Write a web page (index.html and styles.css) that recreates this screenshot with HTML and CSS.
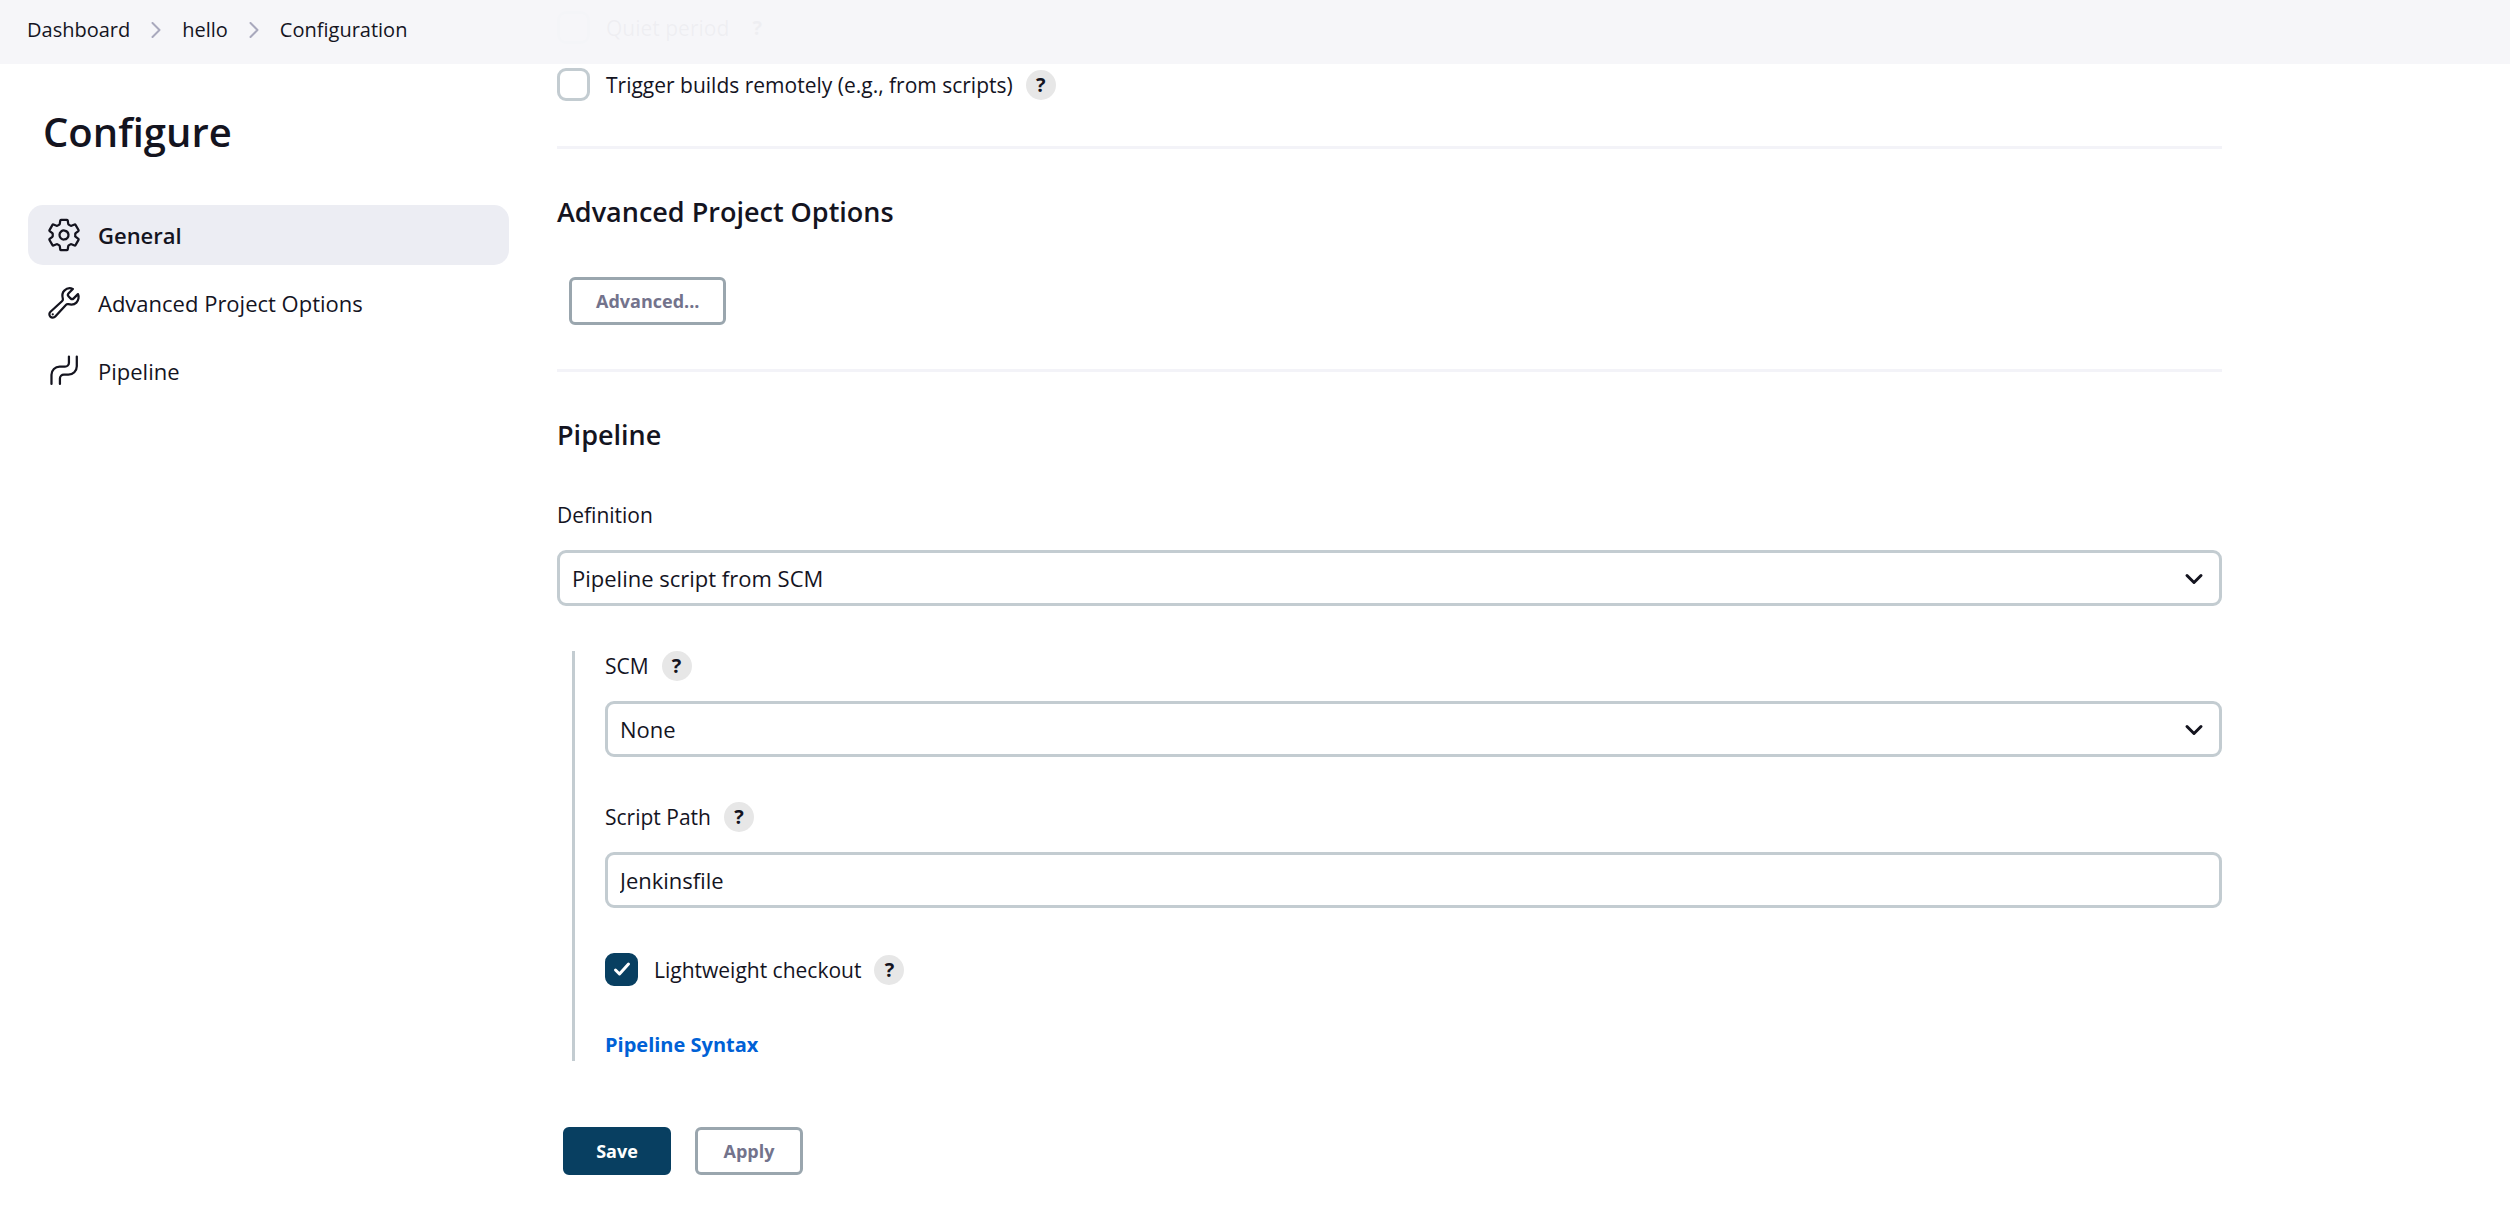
FILE: index.html
```html
<!DOCTYPE html>
<html lang="en">
<head>
<meta charset="utf-8">
<title>hello Config</title>
<link rel="stylesheet" href="styles.css">
</head>
<body>
<header class="breadcrumbs">
  <nav aria-label="Breadcrumb">
    <ol class="breadcrumbs-list">
      <li><a href="#dashboard">Dashboard</a></li>
      <li class="breadcrumbs-separator" aria-hidden="true"><svg width="10" height="16" viewBox="0 0 10 16"><path d="M1.5 1l7 7-7 7"/></svg></li>
      <li><a href="#hello">hello</a></li>
      <li class="breadcrumbs-separator" aria-hidden="true"><svg width="10" height="16" viewBox="0 0 10 16"><path d="M1.5 1l7 7-7 7"/></svg></li>
      <li><a href="#configuration">Configuration</a></li>
    </ol>
  </nav>
</header>

<div class="page">
  <aside class="sidebar">
    <h1>Configure</h1>
    <nav class="tasks" aria-label="Sections">
      <a class="task task-active" href="#general">
        <svg class="task-icon" viewBox="0 0 512 512"><path d="M262.29 192.31a64 64 0 1057.4 57.4 64.13 64.13 0 00-57.4-57.4zM416.39 256a154.34 154.34 0 01-1.53 20.79l45.21 35.46a10.81 10.81 0 012.45 13.75l-42.77 74a10.81 10.81 0 01-13.14 4.59l-44.9-18.08a16.11 16.11 0 00-15.17 1.75A164.48 164.48 0 01325 400.8a15.94 15.94 0 00-8.82 12.14l-6.73 47.89a11.08 11.08 0 01-10.68 9.17h-85.54a11.11 11.11 0 01-10.69-8.87l-6.72-47.82a16.07 16.07 0 00-9-12.22 155.3 155.3 0 01-21.46-12.57 16 16 0 00-15.11-1.71l-44.89 18.07a10.81 10.81 0 01-13.14-4.58l-42.77-74a10.8 10.8 0 012.45-13.75l38.21-30a16.05 16.05 0 006-14.08c-.36-4.17-.58-8.33-.58-12.5s.21-8.27.58-12.35a16 16 0 00-6.07-13.94l-38.19-30A10.81 10.81 0 0149.48 186l42.77-74a10.81 10.81 0 0113.14-4.59l44.9 18.08a16.11 16.11 0 0015.17-1.75A164.48 164.48 0 01187 111.2a15.94 15.94 0 008.82-12.14l6.73-47.89A11.08 11.08 0 01213.23 42h85.54a11.11 11.11 0 0110.69 8.87l6.72 47.82a16.07 16.07 0 009 12.22 155.3 155.3 0 0121.46 12.57 16 16 0 0015.11 1.71l44.89-18.07a10.81 10.81 0 0113.14 4.58l42.77 74a10.8 10.8 0 01-2.45 13.75l-38.21 30a16.05 16.05 0 00-6.05 14.08c.33 4.14.55 8.3.55 12.47z"/></svg>
        <span>General</span>
      </a>
      <a class="task" href="#advanced">
        <svg class="task-icon" viewBox="0 0 512 512"><path d="M393.87 190a32.1 32.1 0 01-45.25 0l-26.57-26.57a32.09 32.09 0 010-45.26L382.19 58a1 1 0 00-.3-1.64c-38.82-16.64-89.15-8.16-121.11 23.57-30.58 30.35-32.32 76-21.12 115.84a31.93 31.93 0 01-9.06 32.08L64 380a48.17 48.17 0 1068 68l153.86-167a31.93 31.93 0 0131.6-9.13c39.54 10.59 84.54 8.6 114.72-21.19 32.49-32 39.5-88.56 23.75-120.93a1 1 0 00-1.6-.26z"/><circle class="solid" cx="96" cy="416" r="16"/></svg>
        <span>Advanced Project Options</span>
      </a>
      <a class="task" href="#pipeline">
        <svg class="task-icon" viewBox="0 0 512 512"><path d="M78 440V310a116 116 0 01116-116h76a56 56 0 0056-56V50M198 440v-76a56 56 0 0156-56h64a120 120 0 00120-120V50"/></svg>
        <span>Pipeline</span>
      </a>
    </nav>
  </aside>

  <form class="config" action="#" onsubmit="return false">
    <section class="triggers">
      <div class="option">
        <input class="checkbox" type="checkbox" id="quiet">
        <label for="quiet">Quiet period</label>
        <button class="help" type="button" aria-label="Help for Quiet period">?</button>
      </div>
      <div class="option">
        <input class="checkbox" type="checkbox" id="remote">
        <label for="remote">Trigger builds remotely (e.g., from scripts)</label>
        <button class="help" type="button" aria-label="Help for remote triggers">?</button>
      </div>
    </section>

    <section class="section" id="advanced">
      <h2>Advanced Project Options</h2>
      <button class="button advanced-button" type="button">Advanced...</button>
    </section>

    <section class="section" id="pipeline">
      <h2>Pipeline</h2>
      <div class="field">
        <div class="field-label"><label for="definition">Definition</label></div>
        <div class="select">
          <select class="control" id="definition"><option>Pipeline script from SCM</option><option>Pipeline script</option></select>
          <svg class="chevron" width="20" height="12" viewBox="0 0 20 12"><path d="M3 2.5l7 7 7-7"/></svg>
        </div>
      </div>

      <div class="nested">
        <div class="field">
          <div class="field-label"><label for="scm">SCM</label><button class="help" type="button" aria-label="Help for SCM">?</button></div>
          <div class="select">
            <select class="control" id="scm"><option>None</option><option>Git</option></select>
            <svg class="chevron" width="20" height="12" viewBox="0 0 20 12"><path d="M3 2.5l7 7 7-7"/></svg>
          </div>
        </div>
        <div class="field">
          <div class="field-label"><label for="script-path">Script Path</label><button class="help" type="button" aria-label="Help for Script Path">?</button></div>
          <input class="control" type="text" id="script-path" value="Jenkinsfile">
        </div>
        <div class="option">
          <span class="checkbox-wrap">
            <input class="checkbox" type="checkbox" id="lightweight" checked>
            <svg class="tick" width="18" height="16" viewBox="0 0 18 16"><path d="M2.5 9l4 4 9-10"/></svg>
          </span>
          <label for="lightweight">Lightweight checkout</label>
          <button class="help" type="button" aria-label="Help for Lightweight checkout">?</button>
        </div>
        <a class="syntax-link" href="#pipeline-syntax">Pipeline Syntax</a>
      </div>
    </section>

    <div class="actions">
      <button class="button button-primary" type="submit">Save</button>
      <button class="button" type="button">Apply</button>
    </div>
  </form>
</div>
</body>
</html>
```
FILE: styles.css
```css
:root {
  --text: #14141f;
  --border: #c3ccd1;
  --button-border: #9aa6ae;
  --button-text: #73738c;
  --primary: #083f61;
  --divider: #f3f3f8;
}

* {
  box-sizing: border-box;
}

body {
  margin: 0;
  background: #fff;
  color: var(--text);
  font: 20px/30px "Open Sans", "Noto Sans", sans-serif;
}

h1,
h2 {
  margin: 0;
  font-weight: 600;
}

/* Breadcrumb bar, stays above the scrolled form */
.breadcrumbs {
  position: sticky;
  top: 0;
  z-index: 1;
  height: 64px;
  padding: 0 27px;
  background: rgba(246, 246, 249, 0.97);
}

.breadcrumbs-list {
  display: flex;
  align-items: center;
  height: 60px;
  margin: 0;
  padding: 0;
  gap: 21px;
  list-style: none;
}

.breadcrumbs a {
  color: inherit;
  text-decoration: none;
}

.breadcrumbs-separator {
  display: flex;
}

.breadcrumbs-separator path {
  fill: none;
  stroke: #a9a9bd;
  stroke-width: 2;
  stroke-linecap: round;
  stroke-linejoin: round;
}

.page {
  display: grid;
  grid-template-columns: 481px minmax(0, 1665px);
  column-gap: 48px;
  padding: 0 28px;
}

/* Sidebar */
.sidebar h1 {
  padding: 40px 15px 45px;
  font-size: 40px;
  line-height: 56px;
}

.tasks {
  display: flex;
  flex-direction: column;
  gap: 8px;
}

.task {
  display: flex;
  align-items: center;
  gap: 16px;
  height: 60px;
  padding: 0 18px;
  border-radius: 15px;
  color: var(--text);
  font-size: 22px;
  text-decoration: none;
}

.task-active {
  background: #ecedf3;
  font-weight: 600;
}

.task-icon {
  width: 36px;
  height: 36px;
  fill: none;
  stroke: var(--text);
  stroke-width: 32;
  stroke-linecap: round;
  stroke-linejoin: round;
}

.task-icon .solid {
  fill: var(--text);
  stroke: none;
}

/* Form */
.triggers {
  display: flex;
  flex-direction: column;
  gap: 24px;
  margin-top: -53px;
  padding-bottom: 45px;
}

.option {
  display: flex;
  align-items: center;
  height: 33px;
}

.option label {
  margin-left: 16px;
}

.option label,
.field-label {
  font-size: 21px;
}

.checkbox {
  display: block;
  width: 33px;
  height: 33px;
  margin: 0;
  border: 3px solid var(--border);
  border-radius: 9px;
  background: #fff;
  appearance: none;
}

.checkbox:checked {
  border-color: var(--primary);
  background: var(--primary);
}

.checkbox-wrap {
  position: relative;
}

.tick {
  position: absolute;
  top: 8px;
  left: 8px;
  pointer-events: none;
  fill: none;
  stroke: #fff;
  stroke-width: 3;
  stroke-linecap: round;
  stroke-linejoin: round;
}

.help {
  width: 30px;
  height: 30px;
  margin-left: 13px;
  padding: 0;
  border: 0;
  border-radius: 50%;
  background: #e7e7e7;
  color: var(--text);
  font: 700 20px/30px "Open Sans", "Noto Sans", sans-serif;
  text-align: center;
}

.section {
  padding-bottom: 44px;
  border-top: 3px solid var(--divider);
}

.section h2 {
  padding: 45px 0 48px;
  font-size: 27px;
  line-height: 35px;
}

.button {
  min-width: 108px;
  height: 48px;
  padding: 0 24px;
  border: 3px solid var(--button-border);
  border-radius: 6px;
  background: #fff;
  color: var(--button-text);
  font: 700 18px/30px "Open Sans", "Noto Sans", sans-serif;
}

.button-primary {
  border-color: var(--primary);
  background: var(--primary);
  color: #fff;
}

.advanced-button {
  display: block;
  margin-left: 12px;
}

.field {
  margin-bottom: 45px;
}

.field-label {
  display: flex;
  align-items: center;
  height: 30px;
  margin-bottom: 20px;
}

.select {
  position: relative;
}

.control {
  display: block;
  width: 100%;
  height: 56px;
  padding: 0 12px;
  border: 3px solid var(--border);
  border-radius: 9px;
  background: #fff;
  color: var(--text);
  font: inherit;
  font-size: 22px;
  appearance: none;
}

.chevron {
  position: absolute;
  top: 23px;
  right: 18px;
  pointer-events: none;
  fill: none;
  stroke: var(--text);
  stroke-width: 3;
  stroke-linecap: round;
  stroke-linejoin: round;
}

.nested {
  margin-left: 15px;
  padding-left: 30px;
  border-left: 3px solid var(--border);
}

.syntax-link {
  display: block;
  padding: 44px 0 1px;
  color: #0061d6;
  font-weight: 700;
  text-decoration: none;
}

.actions {
  display: flex;
  gap: 24px;
  padding: 22px 6px 33px;
}
```
